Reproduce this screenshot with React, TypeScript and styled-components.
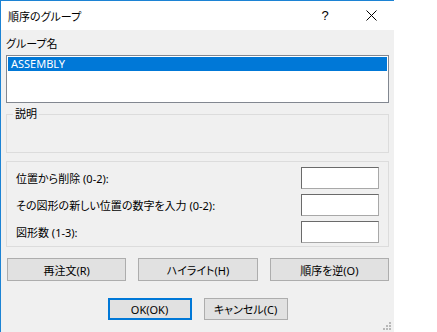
import styled, { createGlobalStyle } from "styled-components";

const GlobalStyle = createGlobalStyle`
  html, body {
    margin: 0;
    padding: 0;
    background: #ffffff;
  }
  body {
    font-family: "Noto Sans", "Noto Sans CJK JP", sans-serif;
    font-size: 11px;
    font-feature-settings: "palt";
    color: #000000;
  }
`;

const fields = [
  { label: "位置から削除 (0-2):" },
  { label: "その図形の新しい位置の数字を入力 (0-2):" },
  { label: "図形数 (1-3):" },
];

const actions = ["再注文(R)", "ハイライト(H)", "順序を逆(O)"];

const CloseIcon = () => (
  <svg width="11" height="11" viewBox="0 0 11 11">
    <path d="M0.5 0.5 L10.5 10.5 M10.5 0.5 L0.5 10.5" stroke="#000" strokeWidth="1" fill="none" />
  </svg>
);

const Grip = () => (
  <svg width="9" height="9" viewBox="0 0 9 9">
    <rect x="7" y="1" width="2" height="2" fill="#b8b8b8" />
    <rect x="4" y="4" width="2" height="2" fill="#b8b8b8" />
    <rect x="7" y="4" width="2" height="2" fill="#b8b8b8" />
    <rect x="1" y="7" width="2" height="2" fill="#b8b8b8" />
    <rect x="4" y="7" width="2" height="2" fill="#b8b8b8" />
    <rect x="7" y="7" width="2" height="2" fill="#b8b8b8" />
  </svg>
);

const App = () => {
  return (
    <>
      <GlobalStyle />
      <Dialog>
        <TitleBar>
          <Title>順序のグループ</Title>
          <CaptionButton>?</CaptionButton>
          <CaptionButton>
            <CloseIcon />
          </CaptionButton>
        </TitleBar>
        <Body>
          <Label>グループ名</Label>
          <ListBox>
            <ListItem $selected>ASSEMBLY</ListItem>
          </ListBox>
          <Group>
            <Legend>説明</Legend>
            <GroupContent />
          </Group>
          <Panel>
            {fields.map((field) => (
              <FieldRow key={field.label}>
                <span>{field.label}</span>
                <Input />
              </FieldRow>
            ))}
          </Panel>
          <ActionRow>
            {actions.map((action) => (
              <Button key={action}>{action}</Button>
            ))}
          </ActionRow>
          <FooterRow>
            <DialogButton $default>OK(OK)</DialogButton>
            <DialogButton>キャンセル(C)</DialogButton>
          </FooterRow>
          <GripBox>
            <Grip />
          </GripBox>
        </Body>
      </Dialog>
    </>
  );
};

export default App;

const Dialog = styled.div`
  width: 393px;
  height: 331px;
  border-left: 1px solid #1c83d4;
  border-top: 1px solid #1c83d4;
  display: flex;
  flex-direction: column;
`;

const TitleBar = styled.div`
  height: 29px;
  background: #ffffff;
  display: flex;
  align-items: center;
`;

const Title = styled.div`
  flex: 1;
  padding-left: 7px;
`;

const CaptionButton = styled.div`
  width: 46px;
  height: 29px;
  display: flex;
  align-items: center;
  justify-content: center;
  font-family: "Liberation Sans", sans-serif;
  font-size: 13px;
`;

const Body = styled.div`
  flex: 1;
  position: relative;
  background: #f0f0f0;
  padding: 7px 5px 0 5px;
  display: flex;
  flex-direction: column;
`;

const Label = styled.div`
  height: 14px;
  line-height: 14px;
`;

const ListBox = styled.div`
  margin-top: 4px;
  height: 44px;
  border: 1px solid #828790;
  background: #ffffff;
  padding: 1px;
`;

const ListItem = styled.div<{ $selected?: boolean }>`
  height: 14px;
  line-height: 14px;
  padding-left: 3px;
  background: ${(p) => (p.$selected ? "#0078d7" : "transparent")};
  color: ${(p) => (p.$selected ? "#ffffff" : "#000000")};
`;

const Group = styled.fieldset`
  margin: 4px 0 0 0;
  padding: 0;
  border: 1px solid #dcdcdc;
  min-width: 0;
`;

const Legend = styled.legend`
  margin-left: 6px;
  padding: 0 2px;
  line-height: 14px;
`;

const GroupContent = styled.div`
  height: 31px;
`;

const Panel = styled.div`
  margin-top: 8px;
  border: 1px solid #dcdcdc;
  padding: 5px 9px 3px 9px;
  display: flex;
  flex-direction: column;
  gap: 5px;
`;

const FieldRow = styled.div`
  display: flex;
  align-items: center;
  justify-content: space-between;
  height: 22px;
`;

const Input = styled.div`
  width: 76px;
  height: 20px;
  background: #ffffff;
  border: 1px solid;
  border-color: #6a6a6a #a8a8a8 #a8a8a8 #6a6a6a;
`;

const ActionRow = styled.div`
  margin-top: 11px;
  padding: 0 0 0 1px;
  display: grid;
  grid-template-columns: repeat(3, 1fr);
  gap: 12px;
`;

const Button = styled.div`
  height: 21px;
  border: 1px solid #adadad;
  background: #e1e1e1;
  display: flex;
  align-items: center;
  justify-content: center;
`;

const FooterRow = styled.div`
  margin-top: 17px;
  display: flex;
  justify-content: center;
  gap: 12px;
`;

const DialogButton = styled.div<{ $default?: boolean }>`
  box-sizing: border-box;
  width: 84px;
  height: 22px;
  border: ${(p) => (p.$default ? "2px solid #0078d7" : "1px solid #adadad")};
  background: #e1e1e1;
  display: flex;
  align-items: center;
  justify-content: center;
`;

const GripBox = styled.div`
  position: absolute;
  right: 3px;
  bottom: 2px;
  line-height: 0;
`;
